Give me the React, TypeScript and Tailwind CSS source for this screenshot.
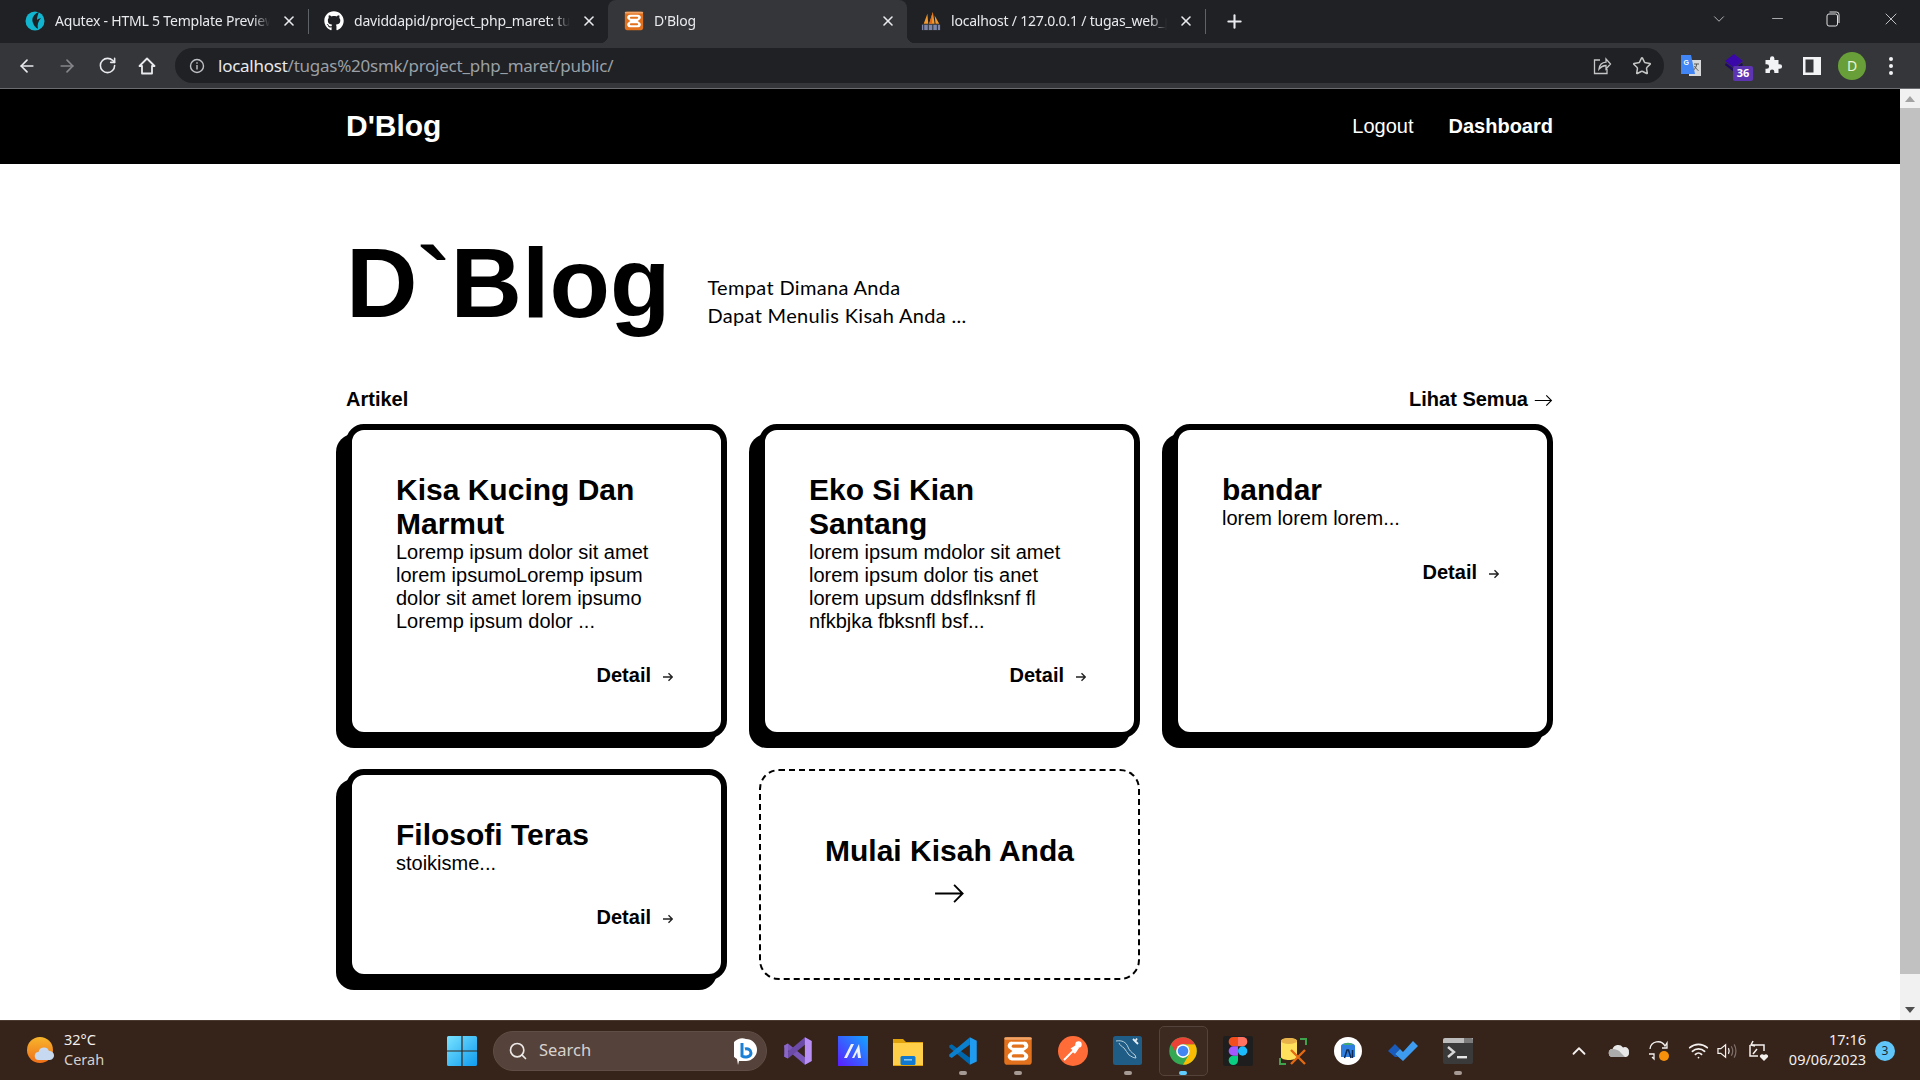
import React from 'react';
import { ArrowLeft, ArrowRight, RotateCw, Star, ChevronDown, ChevronUp, Plus, X, Minus, Search, Wifi } from 'lucide-react';
import { FaGithub } from 'react-icons/fa';

type Tab = { title: string; icon: React.ReactNode; width: string; pad: string; active?: boolean; sep?: boolean };

const Xampp = ({ size = 30 }: { size?: number }) => (
  <svg width={size} height={size} viewBox="0 0 24 24">
    <rect x="1" y="1" width="22" height="22" rx="2.5" fill="#e2711d" />
    <rect x="1" y="1" width="22" height="2" rx="1" fill="#f0a468" />
    <path d="M7 4.500h10a3.200 3.200 0 0 1 2.500 5.200L16.500 12l3 2.300a3.200 3.200 0 0 1-2.500 5.200H7a3.200 3.200 0 0 1-2.500-5.200l3-2.300-3-2.300A3.200 3.200 0 0 1 7 4.500z" fill="#fff" />
    <rect x="7" y="6.800" width="10" height="2.600" rx="1.300" fill="#e2711d" />
    <rect x="7" y="14.600" width="10" height="2.600" rx="1.300" fill="#e2711d" />
  </svg>
);

const Aqutex = () => (
  <svg width="20" height="22" viewBox="0 0 20 22">
    <circle cx="10" cy="11" r="9.5" fill="#12b5cf" />
    <path d="M14 2c-5 2-8 6-6 11 1 3 3 5 5 6-1-4 0-8 3-11-1 0-3 1-4 2 0-3 1-6 2-8z" fill="#1c2126" />
  </svg>
);

const Pma = () => (
  <svg width="22" height="22" viewBox="0 0 22 22">
    <path d="M3 14 7 3l1 11zM9 14 13 1l2 13zM16 14l-1-9 5 9z" fill="#f29a2e" />
    <path d="M9 14 13 1l-1 13z" fill="#e0641a" />
    <rect x="1" y="15" width="20" height="6" fill="#7d86a8" />
    <path d="M3 15v6M8 15v6M13 15v6M18 15v6" stroke="#20232a" strokeWidth="1" />
  </svg>
);

const tabs: Tab[] = [
  { title: 'Aqutex - HTML 5 Template Preview', icon: <Aqutex />, width: 'w-[296px]', pad: 'pl-[13px]', sep: true },
  { title: 'daviddapid/project_php_maret: tugas', icon: <FaGithub className="h-5 w-5 text-white" />, width: 'w-[299px]', pad: 'pl-[15px]' },
  { title: "D'Blog", icon: <Xampp size={20} />, width: 'w-[299px]', pad: 'pl-[16px]', active: true },
  { title: 'localhost / 127.0.0.1 / tugas_web_php', icon: <Pma />, width: 'w-[298px]', pad: 'pl-[14px]', sep: true },
];

type Post = { title: string; body: string };

const posts: Post[] = [
  { title: 'Kisa Kucing Dan Marmut', body: 'Loremp ipsum dolor sit amet lorem ipsumoLoremp ipsum dolor sit amet lorem ipsumo Loremp ipsum dolor ...' },
  { title: 'Eko Si Kian Santang', body: 'lorem ipsum mdolor sit amet lorem ipsum dolor tis anet lorem upsum ddsflnksnf fl nfkbjka fbksnfl bsf...' },
  { title: 'bandar', body: 'lorem lorem lorem...' },
  { title: 'Filosofi Teras', body: 'stoikisme...' },
];

const ThinArrow = ({ className }: { className: string }) => (
  <svg className={className} viewBox="0 0 24 16" fill="none" stroke="currentColor" strokeWidth="1.4">
    <path d="M1 8h21M15.500 1.500 22 8l-6.500 6.500" />
  </svg>
);

const SmallArrow = () => (
  <svg className="ml-3 mt-[2px] h-[10px] w-[10px]" viewBox="0 0 10 10" fill="none" stroke="#222" strokeWidth="1.4">
    <path d="M0 5h9M5.500 1.200 9.300 5 5.500 8.800" />
  </svg>
);

const ChromeTab = ({ tab }: { tab: Tab }) => (
  <>
    <div
      className={`relative flex h-[43px] shrink-0 items-center pb-[2px] ${tab.width} ${tab.pad} ${
        tab.active
          ? "rounded-t-lg bg-[#35363a] before:absolute before:bottom-0 before:-left-2 before:h-2 before:w-2 before:bg-[radial-gradient(circle_at_0_0,transparent_8px,#35363a_8.5px)] before:content-[''] after:absolute after:-right-2 after:bottom-0 after:h-2 after:w-2 after:bg-[radial-gradient(circle_at_100%_0,transparent_8px,#35363a_8.5px)] after:content-['']"
          : ''
      }`}
    >
      <span className="flex w-5 shrink-0 items-center justify-center">{tab.icon}</span>
      <span className="ml-2.5 min-w-0 flex-1 overflow-hidden whitespace-nowrap font-['Noto_Sans'] text-[14px] text-[#e8eaed] tracking-[-0.2px] [mask-image:linear-gradient(to_right,#000_92%,transparent)]">
        {tab.title}
      </span>
      <span className="mx-[9px] flex w-5 shrink-0 justify-center text-[#e8eaed]">
        <X size={16} strokeWidth={2.4} />
      </span>
    </div>
    {tab.sep && <span className="mt-[9px] h-[25px] w-px shrink-0 bg-[#5f6368]" />}
  </>
);

const TitleBar = () => (
  <div className="flex h-[43px] items-start bg-[#202124]">
    <div className="w-3 shrink-0" />
    {tabs.map((t) => (
      <ChromeTab key={t.title} tab={t} />
    ))}
    <span className="ml-[18px] mt-[11px] text-[#e8eaed]">
      <Plus size={21} strokeWidth={2.4} />
    </span>
    <div className="ml-auto flex h-full items-center pb-[6px] text-[#e0e1e3]">
      <ChevronDown size={18} strokeWidth={1} />
      <span className="ml-[41px]"><Minus size={17} strokeWidth={1} /></span>
      <svg className="ml-[40px]" width="14" height="16" viewBox="0 0 14 16" fill="none" stroke="currentColor">
        <rect x="1" y="3" width="10.500" height="12" rx="2" />
        <path d="M3.500 1h7a2.500 2.500 0 0 1 2.500 2.500V12" />
      </svg>
      <span className="ml-[41px] mr-[19px]"><X size={20} strokeWidth={1} /></span>
    </div>
  </div>
);

const Toolbar = () => (
  <div className="flex h-[46px] items-center border-b border-[#6a6c70] bg-[#35363a]">
    <div className="flex items-center text-[#e8eaed]">
      <span className="ml-[17px]"><ArrowLeft size={20} strokeWidth={2} /></span>
      <span className="ml-[20px] text-[#85878b]"><ArrowRight size={20} strokeWidth={2} /></span>
      <span className="ml-[21px]"><RotateCw size={19} strokeWidth={2} /></span>
      <svg className="ml-[20px]" width="20" height="20" viewBox="0 0 20 20" fill="none" stroke="currentColor" strokeWidth="1.8">
        <path d="M10 2.500 2.500 10H5v7.500h10V10h2.500z" strokeLinejoin="round" />
      </svg>
    </div>
    <div className="ml-[18px] flex h-[35px] w-[1489px] items-center rounded-full bg-[#202124]">
      <svg className="ml-[14px]" width="16" height="16" viewBox="0 0 16 16" fill="none" stroke="#bdc1c6" strokeWidth="1.4">
        <circle cx="8" cy="8" r="6.500" />
        <path d="M8 7v4.500M8 4.300v1.400" />
      </svg>
      <span className="ml-[13px] font-['Noto_Sans'] text-[17px] tracking-[-0.25px] text-[#9aa0a6]">
        <span className="text-[#e8eaed]">localhost</span>/tugas%20smk/project_php_maret/public/
      </span>
      <svg className="ml-auto" width="20" height="20" viewBox="0 0 20 20" fill="none" stroke="#c4c7c5" strokeWidth="1.3">
        <path d="M8 4H2.500v13.500h12.500V13M7 13c.5-4 3-6.500 7-6.800V3l4.500 5-4.500 5V9.500C11 9.600 8.800 10.800 7 13z" />
      </svg>
      <span className="ml-[20px] mr-[12px] text-[#c4c7c5]"><Star size={20} strokeWidth={1.8} /></span>
    </div>
    <div className="flex items-center">
      <svg className="ml-[16px]" width="22" height="22" viewBox="0 0 22 22">
        <rect x="9" y="5" width="12" height="16" fill="#d6d8da" />
        <path d="M14 9h5M16.500 9v1c-.3 3-2.500 5-4 5.500M14.500 11c.8 2 2.500 3.500 4 4.500" stroke="#555" strokeWidth="1" fill="none" />
        <path d="M1 0h10l4 19-14 0z" fill="#4285f4" />
        <text x="3.500" y="10" fill="#fff" fontSize="7" fontWeight="700" fontFamily="Liberation Sans">G</text>
      </svg>
      <div className="relative ml-[21px] h-[26px] w-[24px]">
        <svg width="22" height="22" viewBox="0 0 22 22">
          <path d="M11 1l9 7-9 7-9-7z" fill="#3a08a8" />
          <path d="M3 10l8 6 8-6 1 2-9 7-9-7z" fill="#1f0b66" />
        </svg>
        <span className="absolute -bottom-[2px] -right-[6px] flex h-[15px] w-[20px] items-center justify-center rounded-[2px] bg-[#5e35b1] font-['Noto_Sans'] text-[11px] font-bold text-white">36</span>
      </div>
      <svg className="ml-[16px]" width="20" height="20" viewBox="0 0 20 20" fill="#f1f3f4">
        <path d="M7 2.500a2.200 2.200 0 0 1 4.400 0V4h4.100v4.200h1.300a2.300 2.300 0 0 1 0 4.600h-1.300V17h-4.200v-1.400a2.200 2.200 0 0 0-4.400 0V17H2.500v-4.200h1.300a2.300 2.300 0 0 0 0-4.600H2.500V4H7z" />
      </svg>
      <svg className="ml-[20px]" width="18" height="18" viewBox="0 0 18 18">
        <path d="M0 0h18v18H0zM2.500 2.500v13h8v-13z" fill="#f1f3f4" fillRule="evenodd" />
      </svg>
      <span className="ml-[17px] flex h-[28px] w-[28px] items-center justify-center rounded-full bg-[#689f38] font-['Noto_Sans'] text-[14px] text-[#e8f5d8]">D</span>
      <span className="ml-[23px] flex flex-col gap-[3px]">
        <span className="h-[4px] w-[4px] rounded-full bg-[#f1f3f4]" />
        <span className="h-[4px] w-[4px] rounded-full bg-[#f1f3f4]" />
        <span className="h-[4px] w-[4px] rounded-full bg-[#f1f3f4]" />
      </span>
    </div>
  </div>
);

const Card = ({ post }: { post: Post }) => (
  <article className="flex flex-col rounded-[18px] border-[6px] border-black bg-white px-[44px] pb-[45px] pt-[43px] shadow-[-10px_10px_0_0_#000]">
    <h2 className="text-[30px] font-bold text-black">{post.title}</h2>
    <p className="text-[20px]">{post.body}</p>
    <a className="mt-[31px] flex items-center justify-end pr-[4px] text-[20px] font-bold">
      Detail
      <SmallArrow />
    </a>
  </article>
);

const Article = () => (
  <main className="min-w-0 flex-1 bg-white font-['Liberation_Sans'] leading-[normal] text-black">
    <nav className="bg-black">
      <div className="ml-[346px] flex h-[75px] w-[1207px] items-center justify-between pb-[1px] text-white">
        <span className="text-[30px] font-bold">D'Blog</span>
        <div className="flex items-center gap-[35px] text-[20px]">
          <a>Logout</a>
          <a className="font-bold">Dashboard</a>
        </div>
      </div>
    </nav>
    <div className="ml-[346px] w-[1207px]">
      <section className="flex items-end pt-[62px]">
        <h1 className="text-[99px] font-bold">D`Blog</h1>
        <p className="mb-[11px] ml-[37px] font-['Comic_Sans_MS','Lato',cursive] text-[20px] leading-[28px] tracking-[0.33px]">
          Tempat Dimana Anda
          <br />
          Dapat Menulis Kisah Anda ...
        </p>
      </section>
      <div className="mt-[48px] flex items-center justify-between text-[20px] font-bold">
        <span>Artikel</span>
        <span className="flex items-center">
          Lihat Semua
          <ThinArrow className="ml-[6px] mt-[2px] h-[13px] w-[19px]" />
        </span>
      </div>
      <div className="mt-[13px] grid grid-cols-3 gap-x-[32px] gap-y-[31px]">
        {posts.map((p) => (
          <Card key={p.title} post={p} />
        ))}
        <a className="flex flex-col items-center rounded-[20px] border-2 border-dashed border-black pt-[63px]">
          <span className="text-[30px] font-bold">Mulai Kisah Anda</span>
          <ThinArrow className="mt-[15px] h-[21px] w-[35px]" />
        </a>
      </div>
    </div>
  </main>
);

const Scrollbar = () => (
  <div className="flex w-5 shrink-0 flex-col items-center bg-[#f1f1f1]">
    <span className="mt-[7px] h-0 w-0 border-x-[5px] border-b-[6px] border-x-transparent border-b-[#a3a3a3]" />
    <span className="mt-[6px] h-[866px] w-full bg-[#c1c1c1]" />
    <span className="mt-auto mb-[7px] h-0 w-0 border-x-[5px] border-t-[6px] border-x-transparent border-t-[#505050]" />
  </div>
);

const VisualStudio = () => (
  <svg width="30" height="30" viewBox="0 0 24 24">
    <path d="M1 7.500 4 6l13.500 11L23 19.500 17.500 23 1 9z" fill="#7a57b8" />
    <path d="M1 16.500 4 18 17.500 7 23 4.500 17.500 1 1 15z" fill="#6b4aa8" />
    <path d="M17.500 1 23 4v16l-5.500 3z" fill="#b98ef5" />
    <path d="M1 7.500 4 6v12l-3-1.500z" fill="#8a66c7" />
  </svg>
);

const Arc = () => (
  <svg width="30" height="30" viewBox="0 0 30 30">
    <defs>
      <linearGradient id="arc" x1="0" y1="1" x2="1" y2="0">
        <stop offset="0" stopColor="#5b1dff" />
        <stop offset="1" stopColor="#12a5ff" />
      </linearGradient>
    </defs>
    <rect width="30" height="30" fill="url(#arc)" />
    <path d="M6 22 13 8h3L9 22zM14 22 21 8l2 14h-3l-.8-6-3 6z" fill="#fff" opacity=".92" />
  </svg>
);

const Folder = () => (
  <svg width="30" height="30" viewBox="0 0 30 30">
    <path d="M0 3h10l3 3h17v24H0z" fill="#dfa10c" />
    <rect y="7" width="30" height="22" fill="#ffcf4a" />
    <rect x="7.500" y="20" width="15" height="9" rx="1.500" fill="#0f78d1" />
    <rect x="11" y="23" width="8" height="1.600" fill="#7fc6f5" />
  </svg>
);

const VsCode = () => (
  <svg width="30" height="30" viewBox="0 0 24 24">
    <path d="M1 7.600 3 6.500 17.500 17.300V23L1 9.200z" fill="#0067ad" />
    <path d="M17.500 1v5.700L3 17.500l-2-1.100v-1.600z" fill="#0a80cf" />
    <path d="M17.500 1 23 3.700v16.600L17.500 23z" fill="#1f9cf0" />
  </svg>
);

const Postman = () => (
  <svg width="30" height="30" viewBox="0 0 30 30">
    <circle cx="15" cy="15" r="15" fill="#ff6c37" />
    <path d="M6 24 15 15l3-5M15 15l2.500 2" stroke="#fff" strokeWidth="2" fill="none" />
    <circle cx="20.500" cy="8.500" r="3.200" fill="#fff" />
    <path d="M12.500 12.500 18 9l3 3-3 4.500z" fill="#fff" />
  </svg>
);

const MysqlIcon = () => (
  <svg width="30" height="30" viewBox="0 0 30 30">
    <rect width="29" height="29" rx="2.500" fill="#1f5d86" />
    <path d="M3 5c6-1 10 1 12 6 1 3 3 5 7 8l1 3c-3 0-5-2-7-3-2-2-3-5-5-7-2-1.500-4-2.500-5-5" fill="none" stroke="#b8cfdc" strokeWidth="1" />
    <path d="M20 3l5 5M24 2.500l-2 3" stroke="#e4edf2" strokeWidth="1.800" />
  </svg>
);

const Chrome = () => (
  <svg width="30" height="30" viewBox="0 0 48 48">
    <circle cx="24" cy="24" r="22" fill="#34a853" />
    <path d="M24 13H43.050A22 22 0 0 1 24 46L33.530 29.500A11 11 0 0 0 24 13Z" fill="#fbbc04" />
    <path d="M4.950 13A22 22 0 0 1 43.050 13H24A11 11 0 0 0 14.470 29.500Z" fill="#ea4335" />
    <circle cx="24" cy="24" r="11" fill="#fff" />
    <circle cx="24" cy="24" r="8.500" fill="#4285f4" />
  </svg>
);

const Figma = () => (
  <span className="flex h-[30px] w-[30px] items-center justify-center rounded-[2px] bg-[#1e1e1e]">
    <svg width="20" height="28" viewBox="0 0 38 57">
      <path d="M19 28.500a9.500 9.500 0 1 1 19 0 9.500 9.500 0 0 1-19 0z" fill="#1abcfe" />
      <path d="M0 47.500A9.500 9.500 0 0 1 9.500 38H19v9.500a9.500 9.500 0 1 1-19 0z" fill="#0acf83" />
      <path d="M19 0v19h9.500a9.500 9.500 0 1 0 0-19H19z" fill="#ff7262" />
      <path d="M0 9.500A9.500 9.500 0 0 0 9.500 19H19V0H9.500A9.500 9.500 0 0 0 0 9.500z" fill="#f24e1e" />
      <path d="M0 28.500A9.500 9.500 0 0 0 9.500 38H19V19H9.500A9.500 9.500 0 0 0 0 28.500z" fill="#a259ff" />
    </svg>
  </span>
);

const DbTool = () => (
  <svg width="30" height="30" viewBox="0 0 30 30">
    <path d="M3 5c0-4 16-4 16 0v16c0 4-16 4-16 0z" fill="#ffe05c" />
    <ellipse cx="11" cy="5" rx="8" ry="3" fill="#e8b14a" />
    <path d="M22 3h6v6M2 22v6h6" stroke="#3fa34d" strokeWidth="2" fill="none" />
    <path d="M13 14l14 14M27 14 13 28" stroke="#e36a12" strokeWidth="2.400" />
  </svg>
);

const AndroidStudio = () => (
  <svg width="28" height="28" viewBox="0 0 28 28">
    <circle cx="14" cy="14" r="14" fill="#fff" />
    <path d="M7 9c0-4 14-4 14 0v11H7z" fill="#2f7fe0" />
    <path d="M9 8c1-3 9-3 10 0z" fill="#43a872" />
    <path d="M10.500 21 13 13h1.500L17 21M18.500 13v8" stroke="#0d2b55" strokeWidth="1.500" fill="none" />
  </svg>
);

const TodoCheck = () => (
  <svg width="30" height="30" viewBox="0 0 30 30">
    <path d="M0 15 7 8l5 5-5 5 3 3-3 0z" fill="#195abd" />
    <path d="M7 18 12 13l3 3L25 5l5 5L15 25z" fill="#3e9cf0" />
  </svg>
);

const TerminalIcon = () => (
  <svg width="30" height="30" viewBox="0 0 30 30">
    <rect width="30" height="26" y="2" rx="2" fill="#3a3a3a" />
    <path d="M0 4a2 2 0 0 1 2-2h28v5H0z" fill="#bdbdbd" />
    <path d="M21 2h7a2 2 0 0 1 2 2v3h-9z" fill="#7b7b7b" />
    <path d="M5 11l6 5-6 5" stroke="#d8d8d8" strokeWidth="2.400" fill="none" />
    <rect x="14" y="20" width="10" height="2.400" fill="#e6e6e6" />
  </svg>
);

type Pinned = { key: string; icon: React.ReactNode; dot?: boolean; active?: boolean };

const pinned: Pinned[] = [
  { key: 'vs', icon: <VisualStudio /> },
  { key: 'arc', icon: <Arc /> },
  { key: 'folder', icon: <Folder /> },
  { key: 'code', icon: <VsCode />, dot: true },
  { key: 'xampp', icon: <Xampp />, dot: true },
  { key: 'postman', icon: <Postman /> },
  { key: 'mysql', icon: <MysqlIcon />, dot: true },
  { key: 'chrome', icon: <Chrome />, active: true },
  { key: 'figma', icon: <Figma /> },
  { key: 'db', icon: <DbTool /> },
  { key: 'studio', icon: <AndroidStudio /> },
  { key: 'todo', icon: <TodoCheck /> },
  { key: 'term', icon: <TerminalIcon />, dot: true },
];

const PinnedIcon = ({ item }: { item: Pinned }) => (
  <div className="relative flex h-[60px] w-[55px] shrink-0 items-center justify-center">
    {item.active && <span className="absolute left-[3px] top-[5px] h-[50px] w-[49px] rounded-[5px] border border-[#54433a] bg-[#3c2a20]" />}
    <span className="relative">{item.icon}</span>
    {item.dot && <span className="absolute bottom-[6px] h-[4px] w-[8px] rounded-full bg-[#a59a94]" />}
    {item.active && <span className="absolute bottom-[6px] h-[4px] w-[8px] rounded-full bg-[#60cdff]" />}
  </div>
);

const Taskbar = () => (
  <footer className="flex h-[60px] shrink-0 items-center border-t border-[#4a3a30] bg-[#36231a] font-['Noto_Sans'] text-[#f3f0ee]">
    <div className="flex w-[447px] shrink-0 items-center pl-[27px]">
      <svg width="28" height="28" viewBox="0 0 28 28">
        <defs>
          <linearGradient id="sun" x1="0" y1="0" x2="0" y2="1">
            <stop offset="0" stopColor="#f7b52c" />
            <stop offset="1" stopColor="#f0701a" />
          </linearGradient>
        </defs>
        <circle cx="13" cy="13" r="13" fill="url(#sun)" />
        <path d="M12 23a4 4 0 0 1-.5-8 5.500 5.500 0 0 1 10.500-1 4.500 4.500 0 0 1 1 9z" fill="#c6d9f1" />
      </svg>
      <div className="ml-[9px] flex flex-col pb-[3px] text-[14.5px] leading-[20px]">
        <span>32°C</span>
        <span className="text-[#d5cfcb]">Cerah</span>
      </div>
    </div>
    <svg width="30" height="30" viewBox="0 0 30 30">
      <defs>
        <linearGradient id="win" x1="0" y1="0" x2="1" y2="1">
          <stop offset="0" stopColor="#79e3ff" />
          <stop offset="1" stopColor="#0f9bef" />
        </linearGradient>
      </defs>
      <path d="M0 1.500A1.500 1.500 0 0 1 1.500 0h12.900v14.400H0zM15.600 0h12.900A1.500 1.500 0 0 1 30 1.500v12.900H15.600zM0 15.600h14.400V30H1.500A1.500 1.500 0 0 1 0 28.500zM15.600 15.600H30v12.900a1.500 1.500 0 0 1-1.500 1.500H15.600z" fill="url(#win)" />
    </svg>
    <div className="ml-[16px] flex h-[40px] w-[274px] shrink-0 items-center rounded-full border border-[#5f4e45] bg-[#55423a]">
      <Search className="ml-[14px] text-[#ece8e5]" size={20} strokeWidth={2} />
      <span className="ml-[11px] text-[16.5px] text-[#d8d2ce]">Search</span>
      <svg className="ml-auto mr-[8px] mt-[3px]" width="24" height="28" viewBox="0 0 24 28">
        <path d="M12 1a11 11 0 0 1 11 11c0 6-5 11-11 11H5l-1 4-1-6a11 11 0 0 1 9-20z" fill="#fff" />
        <path d="M8 5v13c3 2 9 1 9-3 0-3-3-5-6-4" fill="none" stroke="#1b7fd6" strokeWidth="3" />
      </svg>
    </div>
    <div className="ml-[3.5px] flex shrink-0">
      {pinned.map((p) => (
        <PinnedIcon key={p.key} item={p} />
      ))}
    </div>
    <div className="ml-auto flex items-center">
      <span className="flex w-[40px] justify-center"><ChevronUp size={22} strokeWidth={2} /></span>
      <span className="flex w-[40px] justify-center">
        <svg width="22" height="14" viewBox="0 0 22 14">
          <path d="M5 13a4 4 0 0 1-.5-8A6 6 0 0 1 15 3.500 4.500 4.500 0 0 1 21 9a4 4 0 0 1-3 4z" fill="#e8e8e8" />
          <path d="M4.500 5C8 5 11 6 13 9l4 4H5a4 4 0 0 1-.5-8z" fill="#ababab" />
        </svg>
      </span>
      <span className="flex w-[40px] justify-center">
        <svg width="22" height="22" viewBox="0 0 22 22" fill="none" stroke="#f3f0ee" strokeWidth="1.300">
          <path d="M2 9a8 8 0 0 1 15-3l2-3v5h-5M1 14h5v5l-2-2" />
          <circle cx="16" cy="16" r="5" fill="#f7910b" stroke="none" />
        </svg>
      </span>
      <span className="flex w-[38px] justify-center"><Wifi size={21} strokeWidth={2} /></span>
      <span className="flex w-[20px] justify-center">
        <svg width="21" height="20" viewBox="0 0 21 20" fill="none" stroke="#f3f0ee" strokeWidth="1.300">
          <path d="M1 7.500h3L9 3.500v13l-5-4H1z" />
          <path d="M12 7c1 2 1 4 0 6" />
          <path d="M15 5c1.800 3 1.800 7 0 10M18 3c2.500 4 2.500 10 0 14" stroke="#7c6f68" />
        </svg>
      </span>
      <span className="flex w-[42px] justify-center">
        <svg width="22" height="22" viewBox="0 0 22 22" fill="none" stroke="#f3f0ee" strokeWidth="1.500">
          <path d="M5 5h12v6M3 5v11h8M6 14l4-5" />
          <path d="M6 1 4 5l4 1" />
          <path d="M17 21l-4-4c-1-2 2-4 4-2 2-2 5 0 4 2z" fill="#f3f0ee" stroke="none" />
        </svg>
      </span>
      <div className="flex w-[87px] flex-col items-end whitespace-nowrap pb-[3px] text-[14.5px] leading-[20px]">
        <span>17:16</span>
        <span>09/06/2023</span>
      </div>
      <span className="ml-[9px] mr-[25px] flex h-[20px] w-[20px] items-center justify-center rounded-full bg-[#60c5f9] text-[12px] text-[#1c2a33]">3</span>
    </div>
  </footer>
);

export default function App() {
  return (
    <div className="flex h-screen w-screen flex-col overflow-hidden">
      <TitleBar />
      <Toolbar />
      <div className="flex min-h-0 flex-1">
        <Article />
        <Scrollbar />
      </div>
      <Taskbar />
    </div>
  );
}
